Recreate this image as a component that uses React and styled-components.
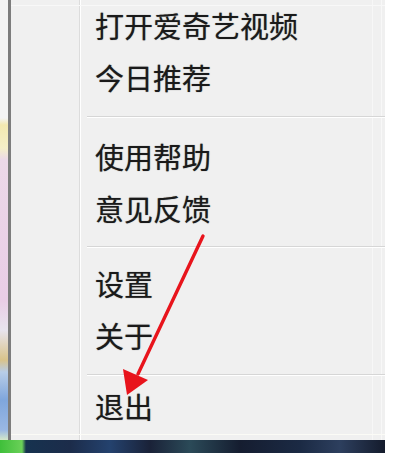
import React from 'react';
import styled, { createGlobalStyle } from 'styled-components';

const GlobalStyle = createGlobalStyle`
  html, body {
    margin: 0;
    padding: 0;
    background: #ffffff;
    overflow: hidden;
  }
`;

const Screen = styled.div`
  width: 400px;
  height: 453px;
  display: flex;
  flex-direction: column;
  background: #ffffff;
  position: relative;
  overflow: hidden;
`;

const Desk = styled.div`
  height: 440px;
  display: flex;
`;

const DesktopStrip = styled.div`
  width: 8px;
  background: linear-gradient(
    to bottom,
    #f4f4f4 0px,
    #f4f4f4 118px,
    #f3e9b0 125px,
    #f5efc8 148px,
    #ecd8e8 160px,
    #e9cde6 300px,
    #e8e4ee 330px,
    #d9c38a 360px,
    #b8cde8 372px,
    #7fa6dc 400px,
    #9ab8e4 430px,
    #d4e8c8 440px
  );
`;

const Menu = styled.div`
  width: 374px;
  display: flex;
  border-left: 3px solid #7d7d7d;
  background: #f0f0f0;
  position: relative;

  &::before {
    content: '';
    position: absolute;
    left: 0;
    right: 0;
    top: 5px;
    height: 1px;
    background: #f8f8f8;
  }

  &::after {
    content: '';
    position: absolute;
    left: 0;
    right: 0;
    bottom: 5px;
    height: 1px;
    background: #fbfbf6;
  }
`;

const Gutter = styled.div`
  width: 68px;
  border-right: 1px solid #dcdcdc;
  box-shadow: 1px 0 0 #ffffff;
`;

const List = styled.ul`
  flex: 1;
  list-style: none;
  margin: -1px 0 0 1px;
  padding: 0;
  background: linear-gradient(
    to right,
    transparent 0,
    transparent 291px,
    #f7f7f7 291px,
    #f7f7f7 292px,
    transparent 292px,
    transparent 300px,
    #f8f8f8 300px,
    #f8f8f8 301px,
    transparent 301px
  );
`;

const Item = styled.li`
  height: 52px;
  line-height: 52px;
  padding-left: 14px;
  font-family: "Noto Sans CJK SC", "Noto Sans", sans-serif;
  font-size: 29px;
  font-weight: 400;
  color: #1a1a1a;
  text-shadow: 0 0 1px rgba(0, 0, 0, 0.55);
  white-space: nowrap;
`;

const Separator = styled.li`
  margin: ${p => p.$before}px 0 ${p => p.$after}px 6px;
  height: 1px;
  background: #d6d6d6;
  border-bottom: 1px solid #ffffff;
`;

const Taskbar = styled.div`
  width: 385px;
  height: 13px;
  background: linear-gradient(
    to right,
    #3fbf3a 0,
    #6ad058 22px,
    #16324f 26px,
    #1c2c4a 70px,
    #24426e 110px,
    #1a2238 150px,
    #2b4a58 190px,
    #151d30 240px,
    #1b2a44 300px,
    #2d3f5e 340px,
    #141b2c 385px
  );
`;

const ArrowLayer = styled.svg`
  position: absolute;
  left: 0;
  top: 0;
  pointer-events: none;
`;

const groups = [
  { items: ['打开爱奇艺视频', '今日推荐'], before: 13, after: 12 },
  { items: ['使用帮助', '意见反馈'], before: 12, after: 9 },
  { items: ['设置', '关于'], before: 13, after: 4 },
  { items: ['退出'] },
];

export default function App() {
  return (
    <>
      <GlobalStyle />
      <Screen>
        <Desk>
          <DesktopStrip />
          <Menu>
            <Gutter />
            <List>
              {groups.map((g, gi) => (
                <React.Fragment key={gi}>
                  {g.items.map(label => (
                    <Item key={label}>{label}</Item>
                  ))}
                  {gi < groups.length - 1 && (
                    <Separator $before={g.before} $after={g.after} />
                  )}
                </React.Fragment>
              ))}
            </List>
          </Menu>
        </Desk>
        <Taskbar />
        <ArrowLayer width="400" height="453" viewBox="0 0 400 453">
          <line x1="203" y1="236" x2="138" y2="374" stroke="#e8141c" strokeWidth="3.4" strokeLinecap="round" />
          <polygon points="127,395 123,369 148,380" fill="#e8141c" />
        </ArrowLayer>
      </Screen>
    </>
  );
}
